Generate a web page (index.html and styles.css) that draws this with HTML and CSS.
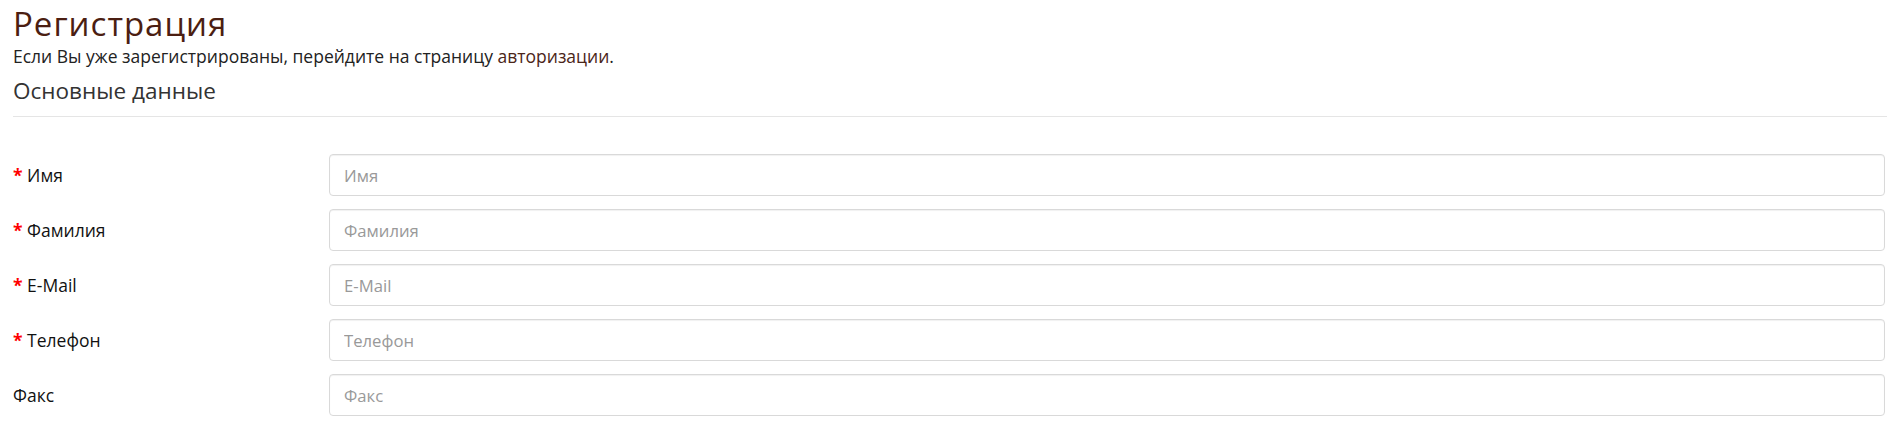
FILE: index.html
```html
<!DOCTYPE html>
<html lang="ru">
<head>
    <meta charset="UTF-8">
    <meta name="viewport" content="width=device-width, initial-scale=1.0">
    <title>Регистрация</title>
    <link rel="stylesheet" href="styles.css">
</head>
<body>
    <div class="page">
        <h1 class="page-title">Регистрация</h1>
        <p class="page-note">Если Вы уже зарегистрированы, перейдите на страницу <a href="#">авторизации</a>.</p>

        <form class="form-horizontal">
            <fieldset>
                <legend>Основные данные</legend>

                <div class="form-group required">
                    <label for="firstname">Имя</label>
                    <input type="text" id="firstname" placeholder="Имя">
                </div>
                <div class="form-group required">
                    <label for="lastname">Фамилия</label>
                    <input type="text" id="lastname" placeholder="Фамилия">
                </div>
                <div class="form-group required">
                    <label for="email">E-Mail</label>
                    <input type="email" id="email" placeholder="E-Mail">
                </div>
                <div class="form-group required">
                    <label for="telephone">Телефон</label>
                    <input type="tel" id="telephone" placeholder="Телефон">
                </div>
                <div class="form-group">
                    <label for="fax">Факс</label>
                    <input type="text" id="fax" placeholder="Факс">
                </div>
            </fieldset>
        </form>
    </div>
</body>
</html>
```

FILE: styles.css
```css
body {
    margin: 0;
    font-family: "Open Sans", "Liberation Sans", sans-serif;
    color: #222;
    background: #fff;
}
.page {
    margin: 0 10px 0 13px;
    padding-top: 6px;
}
.page-title {
    margin: 0;
    font-size: 33px;
    line-height: 36px;
    font-weight: 400;
    letter-spacing: 1px;
    color: #4b1e12;
}
.page-note {
    margin: 2px 0 0;
    font-size: 17.5px;
    line-height: 24px;
}
.page-note a {
    color: #4b2518;
    text-decoration: none;
}
.form-horizontal {
    margin-top: 8px;
}
fieldset {
    border: none;
    margin: 0;
    padding: 0;
}
legend {
    display: block;
    width: 100%;
    margin: 0 0 37px;
    padding: 0 0 10px;
    font-size: 22.5px;
    line-height: 30px;
    color: #333;
    border-bottom: 1px solid #e5e5e5;
}
.form-group {
    display: grid;
    grid-template-columns: 316px 1fr;
    align-items: center;
    margin: 0 2px 13px 0;
}
.form-group label {
    font-size: 17.5px;
    color: #111;
}
.required label::before {
    content: "* ";
    color: #f00;
    font-weight: bold;
}
.form-group input {
    height: 42px;
    box-sizing: border-box;
    padding: 6px 14px;
    font-family: inherit;
    font-size: 16.7px;
    color: #555;
    border: 1px solid #d9d9d9;
    border-radius: 4px;
    box-shadow: inset 0 1px 1px rgba(0, 0, 0, 0.06);
}
.form-group input::placeholder {
    color: #999;
}
```
